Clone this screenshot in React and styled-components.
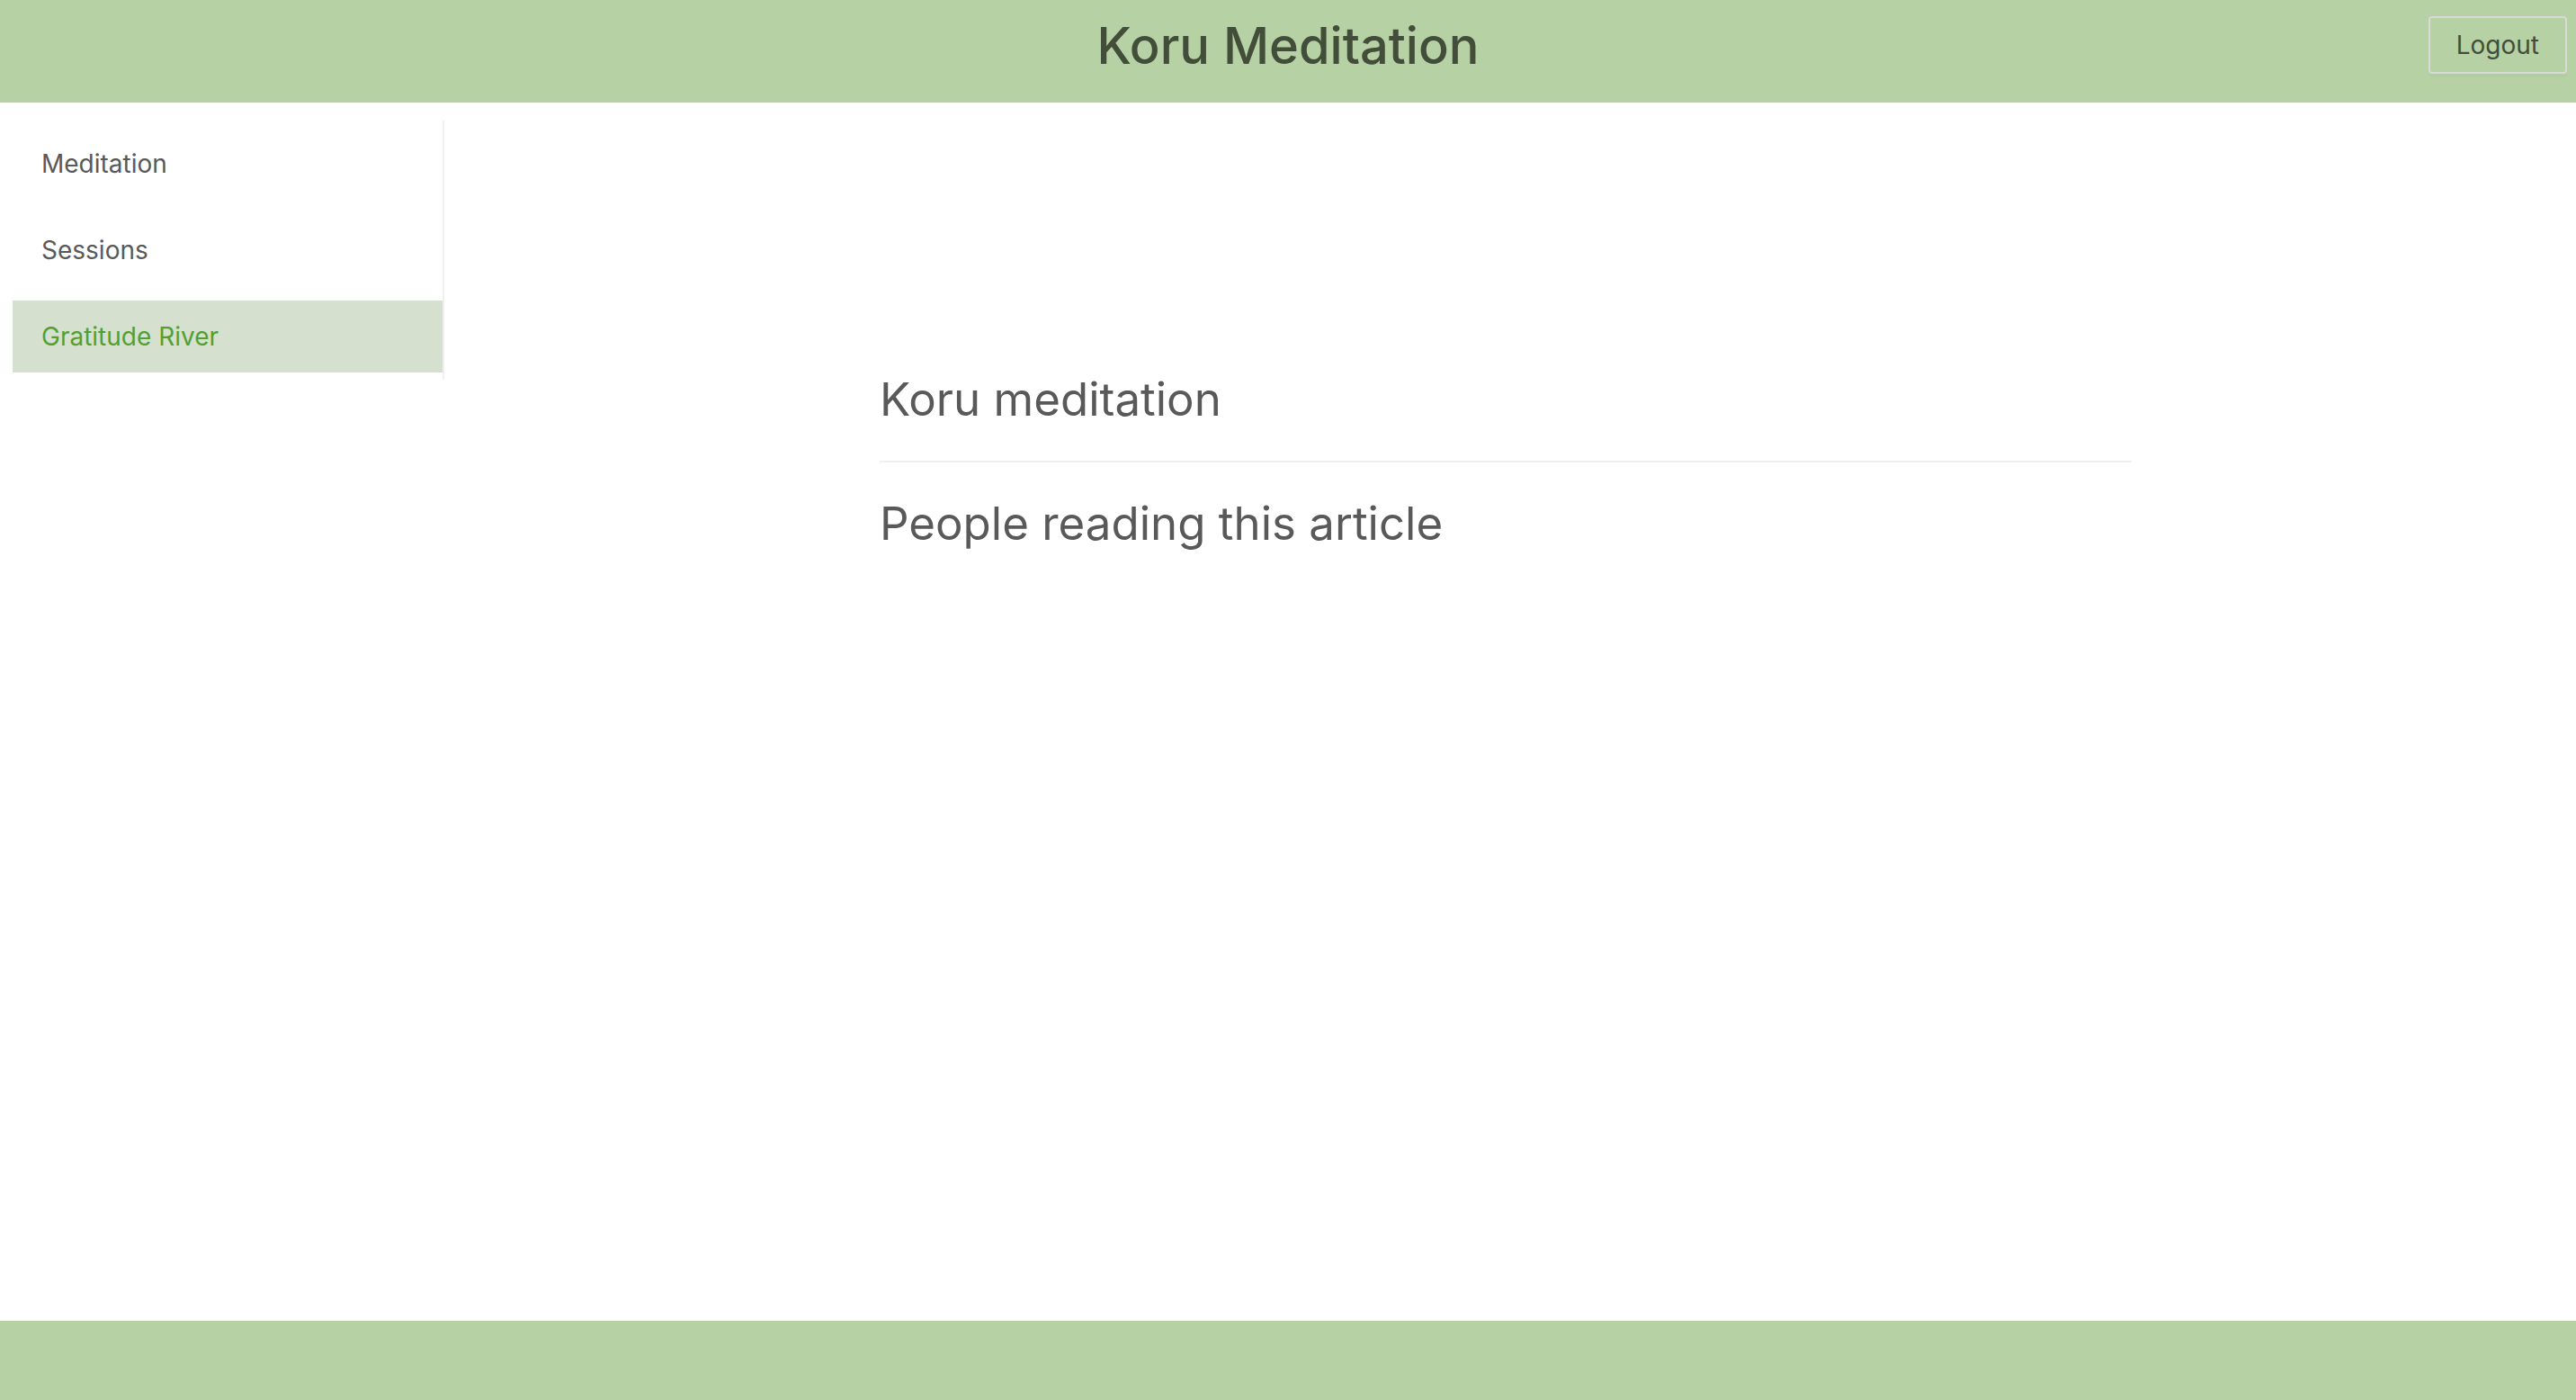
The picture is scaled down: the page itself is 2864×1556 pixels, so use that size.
import React from "react";
import styled, { createGlobalStyle } from "styled-components";

const Global = createGlobalStyle`
  * { box-sizing: border-box; }
  body { margin: 0; background: #fff; font-family: Inter, "Liberation Sans", sans-serif; }
`;

const Page = styled.div`
  display: flex;
  flex-direction: column;
  min-height: 100vh;
`;

const Header = styled.header`
  display: grid;
  grid-template-columns: 1fr auto 1fr;
  align-items: start;
  height: 114px;
  padding: 18px 10px;
  background: #b6d1a4;
`;

const Brand = styled.h1`
  grid-column: 2;
  margin: 0;
  font-size: 56px;
  line-height: 66px;
  font-weight: 500;
  color: #424e39;
`;

const LogoutButton = styled.button`
  justify-self: end;
  height: 64px;
  padding: 0 29px;
  border: 2px solid #d9d9d9;
  border-radius: 4px;
  background: transparent;
  box-shadow: 0 4px 0 rgba(0, 0, 0, 0.016);
  font-family: inherit;
  font-size: 28px;
  color: #424e39;
  cursor: pointer;
`;

const Body = styled.div`
  display: flex;
  flex: 1;
  align-items: flex-start;
  padding: 20px 14px;
`;

const Menu = styled.nav`
  display: flex;
  flex-direction: column;
  gap: 16px;
  width: 480px;
  padding: 8px 0;
  border-right: 2px solid #f0f0f0;
`;

const MenuLink = styled.a`
  padding: 0 32px;
  font-size: 28px;
  line-height: 80px;
  text-decoration: none;
  color: ${(p) => (p.$active ? "#52a032" : "#595959")};
  background: ${(p) => (p.$active ? "#d5e0ce" : "transparent")};
`;

const Article = styled.main`
  flex: 1;
  padding: 270px 480px 0 484px;
`;

const Title = styled.h2`
  margin: 0;
  font-size: 51px;
  line-height: 80px;
  font-weight: 400;
  color: #595959;
`;

const Divider = styled.hr`
  margin: 28px 0;
  border: 0;
  border-top: 2px solid #f0f0f0;
`;

const Footer = styled.footer`
  height: 88px;
  background: #b6d1a4;
`;

const items = ["Meditation", "Sessions", "Gratitude River"];

export default function App() {
  return (
    <Page>
      <Global />
      <Header>
        <Brand>Koru Meditation</Brand>
        <LogoutButton type="button">Logout</LogoutButton>
      </Header>
      <Body>
        <Menu>
          {items.map((item) => (
            <MenuLink key={item} href="#" $active={item === "Gratitude River"}>
              {item}
            </MenuLink>
          ))}
        </Menu>
        <Article>
          <Title>Koru meditation</Title>
          <Divider />
          <Title>People reading this article</Title>
        </Article>
      </Body>
      <Footer />
    </Page>
  );
}
